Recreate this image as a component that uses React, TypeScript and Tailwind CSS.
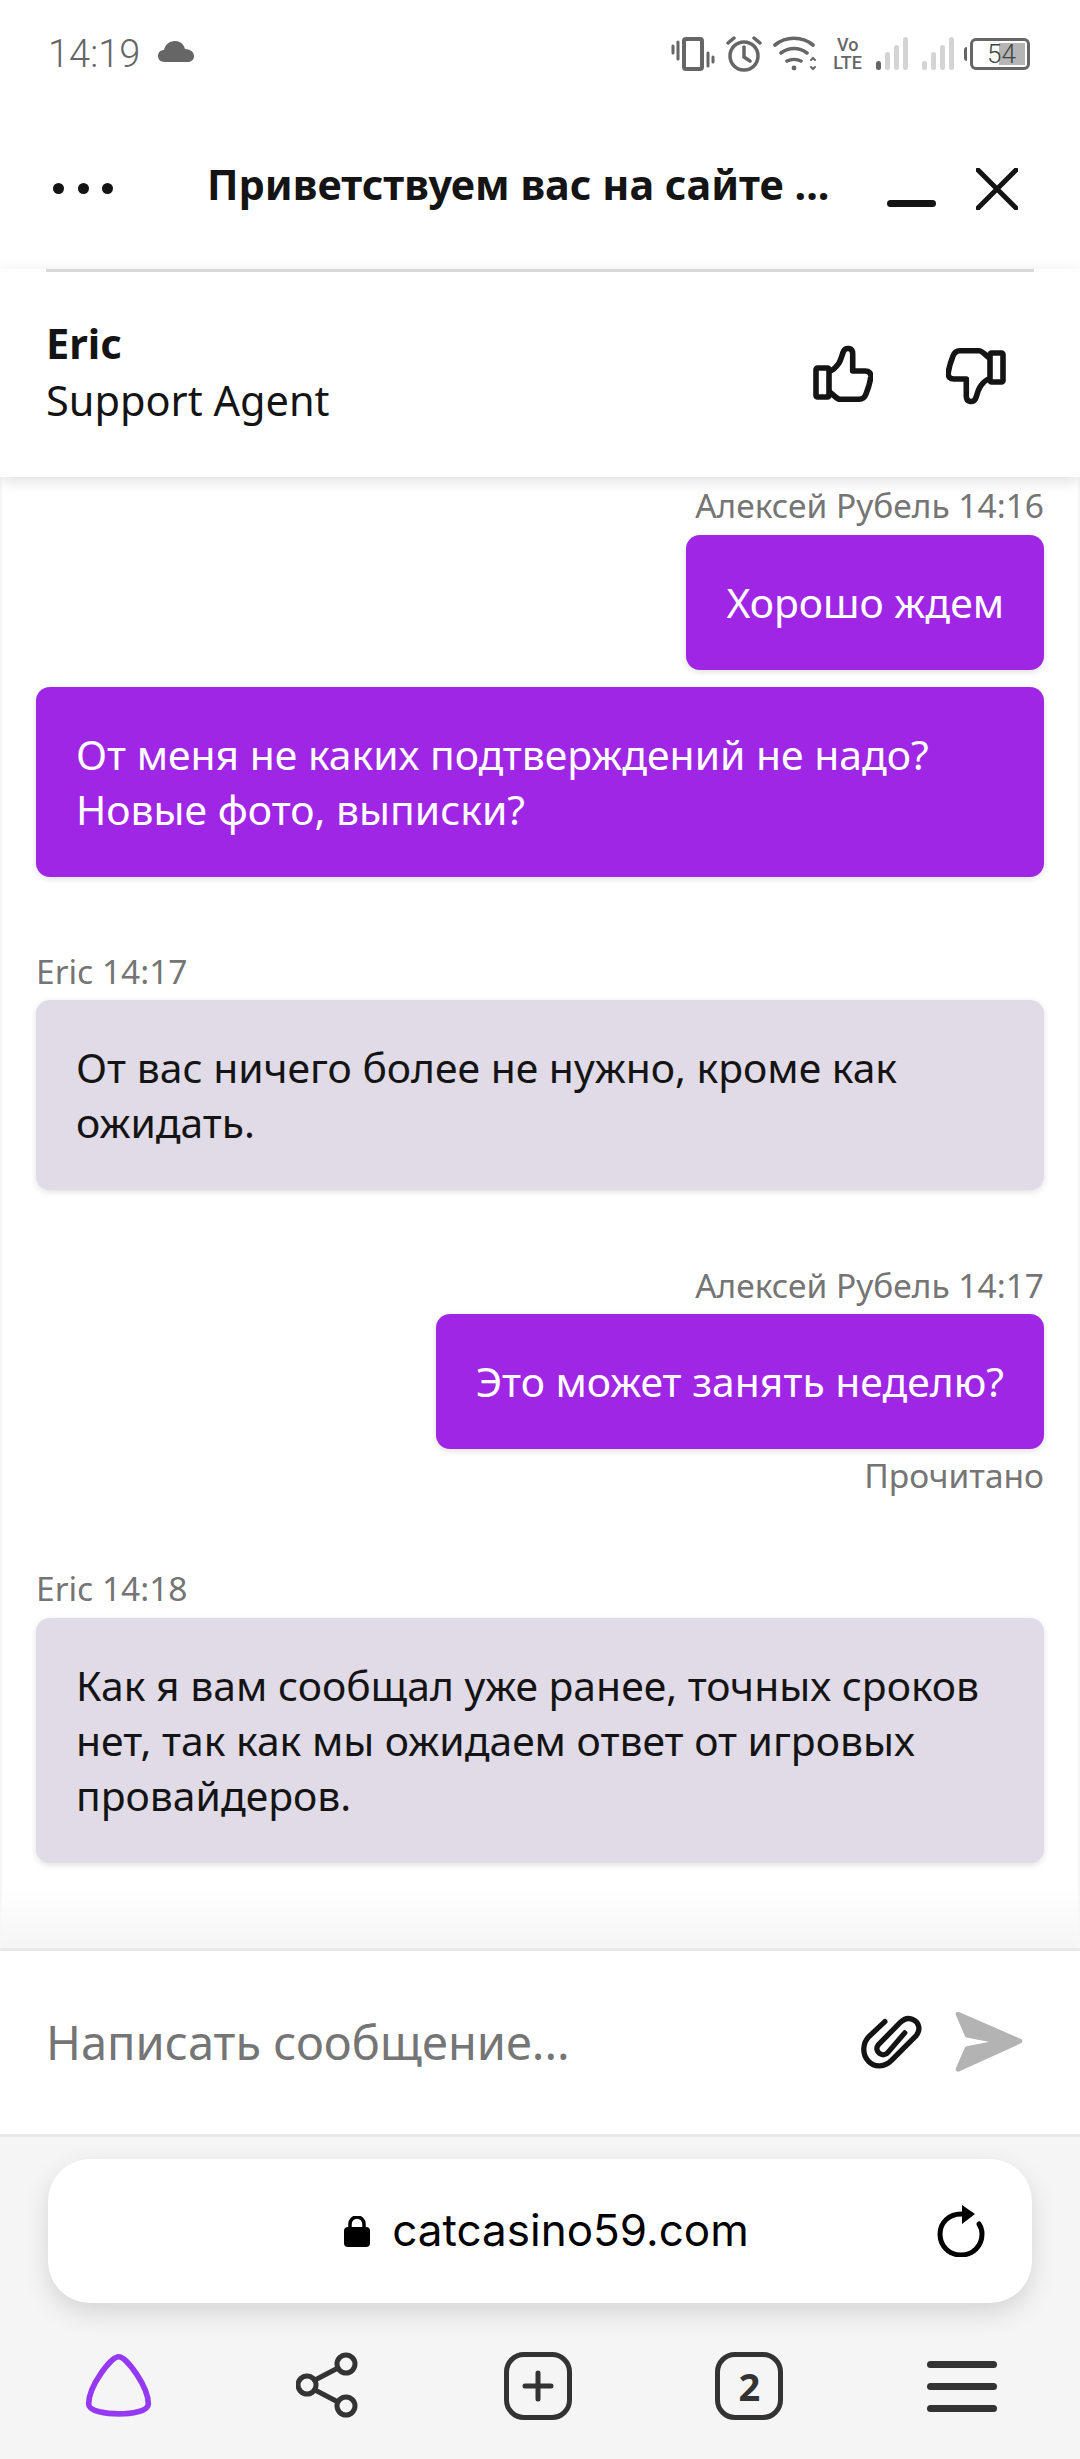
import React from "react";

const Vibrate = () => (
  <svg width="44" height="34" viewBox="0 0 44 34" fill="none" stroke="#666" strokeLinecap="round">
    <rect x="13" y="2" width="18" height="30" rx="2" strokeWidth="4" />
    <path d="M2 9v7M7 5v17M37 16v13M42 20v5" strokeWidth="3" />
  </svg>
);
const Alarm = () => (
  <svg width="38" height="36" viewBox="0 0 36 36" fill="none" stroke="#666" strokeWidth="3.5" strokeLinecap="round">
    <circle cx="18" cy="20" r="14" />
    <path d="M18 11v10l6 4M2 7l6-5M34 7l-6-5" />
  </svg>
);
const Wifi = () => (
  <svg width="44" height="36" viewBox="0 0 44 36" fill="none" stroke="#666" strokeWidth="3.6" strokeLinecap="round">
    <path d="M2 9c11-9 27-9 38 0M8 17c8-6 18-6 26 0M14 25c4-2 10-2 14 0" />
    <circle cx="21" cy="32" r="2.4" fill="#666" stroke="none" />
    <path d="M38 24l2-2 2 2M38 31l2 2 2-2" strokeWidth="2" />
  </svg>
);
const Signal = ({ on }: { on: number }) => (
  <svg width="32" height="34" viewBox="0 0 32 34">
    {[0, 1, 2, 3].map((i) => (
      <rect key={i} x={i * 9} y={[24, 15, 8, 0][i]} width="5" height={[9, 18, 25, 33][i]} rx="2.5" fill={i < on ? "#666" : "#d4d4d4"} />
    ))}
  </svg>
);

const Thumb = ({ down }: { down?: boolean }) => (
  <svg width="60" height="60" viewBox="0 0 60 60" fill="none" stroke="#141414" strokeWidth="5.6" strokeLinejoin="round" className={down ? "rotate-180" : ""}>
    <rect x="3" y="23" width="13" height="29" rx="1.5" />
    <path d="M16.3 26 C21 25.5 24 21 26 18 C29 13 29 9 30.7 6 C32.5 2.5 39.7 2 39.7 9 V26 H52 C56 26 58 28 57.8 32 C57 38 55 44 53 49 C51.5 53 49.5 54.3 46.3 54.3 H27 C24 54.3 23 52 16.3 46.7" />
  </svg>
);

const Clip = () => (
  <svg width="67" height="58" viewBox="115 105 200 175" fill="none" stroke="#141414" strokeWidth="16" strokeLinecap="round" strokeLinejoin="round">
    <path d="M195 128 L148 172 C128 192 125 225 145 247 C165 268 195 265 215 245 L288 172 C305 152 298 130 280 122 C265 114 250 122 240 132 L175 198 C160 218 190 240 205 220 L255 162" />
  </svg>
);

const Send = () => (
  <svg width="72" height="67" viewBox="400 92 215 200" fill="#b3b3b3" stroke="#b3b3b3" strokeWidth="14" strokeLinejoin="round">
    <path d="M415 107 L600 188 L415 272 L442 210 L545 190 L442 170 Z" />
  </svg>
);

const Alisa = () => (
  <svg width="68" height="66" viewBox="70 66 205 198" fill="none" stroke="#9639f5" strokeWidth="17" strokeLinejoin="round">
    <path d="M175 80 C150 80 84 170 84 222 C84 245 140 252 175 252 C210 252 264 245 264 222 C264 170 198 80 175 80 Z" />
  </svg>
);

const Share = () => (
  <svg width="64" height="66" viewBox="0 0 64 66" fill="none" stroke="#333" strokeWidth="5">
    <circle cx="11" cy="33" r="9" />
    <circle cx="50" cy="12" r="9" />
    <circle cx="50" cy="54" r="9" />
    <path d="M19 28 L42 16 M19 38 L42 50" />
  </svg>
);

const Bubble = ({ mine, wide, children }: { mine?: boolean; wide?: boolean; children: React.ReactNode }) => (
  <div
    className={`rounded-[14px] px-10 py-10 text-[40.85px] leading-[55px] shadow-[0_2px_6px_rgba(0,0,0,0.13)] ${
      mine ? "bg-[#a026e6] text-white" : "bg-[#e0dbe6] text-[#141414]"
    } ${wide ? "self-stretch" : mine ? "self-end" : "self-start"}`}
  >
    {children}
  </div>
);

const Meta = ({ right, className, children }: { right?: boolean; className?: string; children: React.ReactNode }) => (
  <div className={`text-[33.5px] leading-[40px] text-[#757575] ${right ? "text-right" : "text-left"} ${className ?? ""}`}>{children}</div>
);

export default function App() {
  return (
    <div className="flex h-[2459px] w-[1080px] flex-col overflow-hidden bg-white font-['Noto_Sans',sans-serif]">
      {/* status bar */}
      <div className="flex h-[108px] shrink-0 items-center justify-between pl-[48px] pr-[50px] text-[#666]">
        <div className="flex items-center gap-[18px]">
          <span className="font-['Roboto',sans-serif] text-[38px] font-light leading-none">14:19</span>
          <svg width="36" height="22" viewBox="0 0 36 22" fill="#666" className="mt-[-4px]">
            <path d="M7 21 C2 21 0 18 0 15 C0 11 3 9 6 9 C7 4 11 0 17 0 C23 0 26 4 27 8 C32 8 36 11 36 15 C36 19 33 21 29 21 Z" />
          </svg>
        </div>
        <div className="flex items-center gap-[10px]">
          <Vibrate />
          <Alarm />
          <Wifi />
          <div className="ml-[6px] flex flex-col items-center font-['Roboto',sans-serif] text-[18px] font-medium leading-[18px] text-[#666]">
            <span>Vo</span>
            <span>LTE</span>
          </div>
          <div className="ml-[4px]"><Signal on={1} /></div>
          <div className="ml-[4px]"><Signal on={0} /></div>
          <div className="relative flex items-center">
            <div className="mr-[3px] h-[14px] w-[3px] rounded-l bg-[#666]" />
            <div className="relative flex h-[32px] w-[60px] items-center overflow-hidden rounded-[6px] border-[3px] border-[#666]">
              <div className="absolute inset-y-[2px] right-[2px] w-[26px] bg-[#b5b5b5]" />
              <span className="relative ml-[14px] font-['Roboto',sans-serif] text-[26px] font-light leading-none text-[#444]">54</span>
            </div>
          </div>
        </div>
      </div>

      {/* title */}
      <div className="flex h-[161px] shrink-0 items-center pl-[53px] pr-[62px]">
        <div className="flex w-[60px] justify-between">
          <i className="size-[11px] rounded-full bg-[#141414]" />
          <i className="size-[11px] rounded-full bg-[#141414]" />
          <i className="size-[11px] rounded-full bg-[#141414]" />
        </div>
        <div className="ml-[94px] mb-[8px] flex-1 text-[41.4px] font-bold leading-none text-[#141414]">Приветствуем вас на сайте ...</div>
        <div className="mt-[30px] mr-[40px] h-[7px] w-[49px] rounded-full bg-[#141414]" />
        <svg width="42" height="42" viewBox="0 0 42 42" stroke="#141414" strokeWidth="5" strokeLinecap="round">
          <path d="M2 2L40 40M40 2L2 40" />
        </svg>
      </div>

      {/* agent card */}
      <div className="relative z-10 shrink-0 bg-white shadow-[0_4px_14px_rgba(0,0,0,0.13)]">
        <div className="mx-[46px] h-[3px] bg-[#d8d8d8]" />
        <div className="flex h-[205px] items-center justify-between pl-[46px] pr-[74px]">
          <div className="mt-[-5px] text-[#141414]">
            <div className="text-[41.5px] font-bold leading-[57px]">Eric</div>
            <div className="text-[41.5px] leading-[57px]">Support Agent</div>
          </div>
          <div className="flex items-center gap-[73px]">
            <Thumb />
            <Thumb down />
          </div>
        </div>
      </div>

      {/* messages */}
      <div className="flex flex-1 flex-col overflow-hidden border-x-2 border-[#f7f7f7] bg-gradient-to-b from-white from-[96%] to-[#f5f5f5] px-[34px] pt-[8px]">
        <Meta right>Алексей Рубель 14:16</Meta>
        <div className="mt-[10px] flex flex-col gap-[17px]">
          <Bubble mine>Хорошо ждем</Bubble>
          <Bubble mine wide>
            От меня не каких подтверждений не надо?
            <br />
            Новые фото, выписки?
          </Bubble>
        </div>
        <Meta className="mt-[74px]">Eric 14:17</Meta>
        <div className="mt-[9px] flex flex-col">
          <Bubble wide>От вас ничего более не нужно, кроме как ожидать.</Bubble>
        </div>
        <Meta right className="mt-[75px]">Алексей Рубель 14:17</Meta>
        <div className="mt-[9px] flex flex-col">
          <Bubble mine>Это может занять неделю?</Bubble>
        </div>
        <Meta right className="mt-[6px]">Прочитано</Meta>
        <Meta className="mt-[73px]">Eric 14:18</Meta>
        <div className="mt-[10px] flex flex-col">
          <Bubble wide>Как я вам сообщал уже ранее, точных сроков нет, так как мы ожидаем ответ от игровых провайдеров.</Bubble>
        </div>
      </div>

      {/* input */}
      <div className="flex h-[189px] shrink-0 items-center border-y-[3px] border-[#e8e8e8] bg-white pl-[46px] pr-[55px]">
        <div className="flex-1 text-[47px] leading-none text-[#757575]">Написать сообщение...</div>
        <div className="flex items-center gap-[28px]">
          <Clip />
          <Send />
        </div>
      </div>

      {/* browser */}
      <div className="flex h-[322px] shrink-0 flex-col bg-[#f5f5f5] px-[48px] pt-[22px]">
        <div className="relative flex h-[144px] items-center justify-center rounded-[42px] bg-white shadow-[0_10px_26px_rgba(0,0,0,0.13)]">
          <div className="flex items-center gap-[22px] pl-[13px]">
            <svg width="26" height="31" viewBox="0 0 26 31" fill="#000">
              <rect y="11" width="26" height="20" rx="4" />
              <path d="M6 12V8a7 7 0 0114 0v4" fill="none" stroke="#000" strokeWidth="3.5" />
            </svg>
            <span className="mt-[-2px] font-['Inter',sans-serif] text-[44px] leading-none text-black">catcasino59.com</span>
          </div>
          <svg className="absolute right-[47px] top-[46px]" width="48" height="52" viewBox="0 0 48 52" fill="none" stroke="#000" strokeWidth="5" strokeLinecap="round">
            <path d="M26 9 C12 8 3 18 3 29 C3 41 12 50 24 50 C36 50 45 41 45 29 C45 25 44 22 42 19" />
            <path d="M25 0 L38 9 L25 19 Z" fill="#000" stroke="none" />
          </svg>
        </div>
        <div className="mt-[49px] flex items-start justify-between pl-[36px] pr-[35px]">
          <Alisa />
          <Share />
          <div className="flex size-[68px] items-center justify-center rounded-[20px] border-[5px] border-[#333]">
            <svg width="34" height="34" viewBox="0 0 34 34" stroke="#333" strokeWidth="5" strokeLinecap="round">
              <path d="M17 4V30M4 17H30" />
            </svg>
          </div>
          <div className="flex size-[68px] items-center justify-center rounded-[20px] border-[5px] border-[#333] font-['Noto_Sans',sans-serif] text-[38px] font-bold leading-none text-[#333]">2</div>
          <div className="flex h-[68px] w-[70px] flex-col justify-center gap-[15px]">
            <i className="h-[7px] rounded-full bg-[#333]" />
            <i className="h-[7px] rounded-full bg-[#333]" />
            <i className="h-[7px] rounded-full bg-[#333]" />
          </div>
        </div>
      </div>
    </div>
  );
}
